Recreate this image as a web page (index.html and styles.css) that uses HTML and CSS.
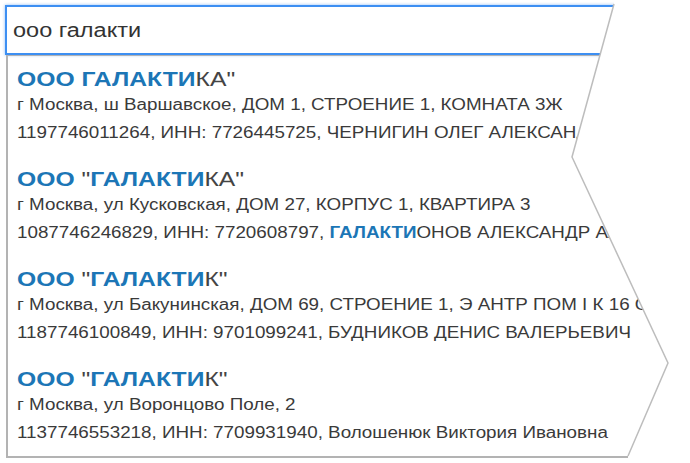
FILE: index.html
```html
<!DOCTYPE html>
<html lang="ru">
<head>
    <meta charset="UTF-8">
    <title>Подсказки по организациям</title>
    <link rel="stylesheet" href="styles.css">
</head>
<body>
    <div class="sheet">
        <div class="clip">
            <div class="search"><span class="wide">ооо галакти</span></div>
            <ul class="suggestions">
                <li class="item">
                    <div class="name wide"><b class="hl">ООО ГАЛАКТИ</b>КА"</div>
                    <div class="line wide">г Москва, ш Варшавское, ДОМ 1, СТРОЕНИЕ 1, КОМНАТА 3Ж</div>
                    <div class="line wide">1197746011264, ИНН: 7726445725, ЧЕРНИГИН ОЛЕГ АЛЕКСАНДРОВИЧ</div>
                </li>
                <li class="item">
                    <div class="name wide"><b class="hl">ООО</b> "<b class="hl">ГАЛАКТИ</b>КА"</div>
                    <div class="line wide">г Москва, ул Кусковская, ДОМ 27, КОРПУС 1, КВАРТИРА 3</div>
                    <div class="line wide">1087746246829, ИНН: 7720608797, <b class="hl">ГАЛАКТИ</b>ОНОВ АЛЕКСАНДР АЛЕКСАНДРОВИЧ</div>
                </li>
                <li class="item">
                    <div class="name wide"><b class="hl">ООО</b> "<b class="hl">ГАЛАКТИ</b>К"</div>
                    <div class="line wide">г Москва, ул Бакунинская, ДОМ 69, СТРОЕНИЕ 1, Э АНТР ПОМ I К 16 ОФ 1</div>
                    <div class="line wide">1187746100849, ИНН: 9701099241, БУДНИКОВ ДЕНИС ВАЛЕРЬЕВИЧ</div>
                </li>
                <li class="item">
                    <div class="name wide"><b class="hl">ООО</b> "<b class="hl">ГАЛАКТИ</b>К"</div>
                    <div class="line wide">г Москва, ул Воронцово Поле, 2</div>
                    <div class="line wide">1137746553218, ИНН: 7709931940, Волошенюк Виктория Ивановна</div>
                </li>
            </ul>
        </div>
        <svg class="edge" width="690" height="463" viewBox="0 0 690 463">
            <polyline points="614,4 572,157 668,363 628,456" fill="none" stroke="#bdbdbd" stroke-width="1.5"/>
        </svg>
    </div>
</body>
</html>
```

FILE: styles.css
```css
body {
    margin: 0;
    background: #fff;
    font-family: "Liberation Sans", Arial, sans-serif;
    color: #3a3a3a;
}
.sheet {
    position: relative;
    width: 690px;
    height: 463px;
    overflow: hidden;
}
.clip {
    padding: 5px 0 0 5px;
    height: 458px;
    clip-path: polygon(0 0, 614px 0, 614px 4px, 572px 157px, 668px 363px, 628px 456px, 628px 463px, 0 463px);
}
/* the source text is drawn noticeably wider than Arial */
.wide {
    display: inline-block;
    transform: scaleX(1.175);
    transform-origin: 0 0;
}
.search {
    height: 46px;
    width: 720px;
    border: 2px solid #3d8ff2;
    box-shadow: 0 0 3px rgba(61, 143, 242, 0.6);
    padding-left: 6px;
    font-size: 20px;
    line-height: 46px;
    color: #333;
}
.suggestions {
    list-style: none;
    margin: 0 0 0 1px;
    padding: 0;
    width: 720px;
    border: 2px solid #b3b3b3;
    border-top-width: 1px;
}
.item {
    padding: 11px 0 9px 9px;
    white-space: nowrap;
}
.name {
    display: block;
    font-size: 21px;
    line-height: 24px;
    color: #444;
}
.line {
    display: block;
    font-size: 16px;
    line-height: 28px;
}
.hl {
    color: #1c76b6;
    font-weight: bold;
}
.edge {
    position: absolute;
    left: 0;
    top: 0;
}
```
